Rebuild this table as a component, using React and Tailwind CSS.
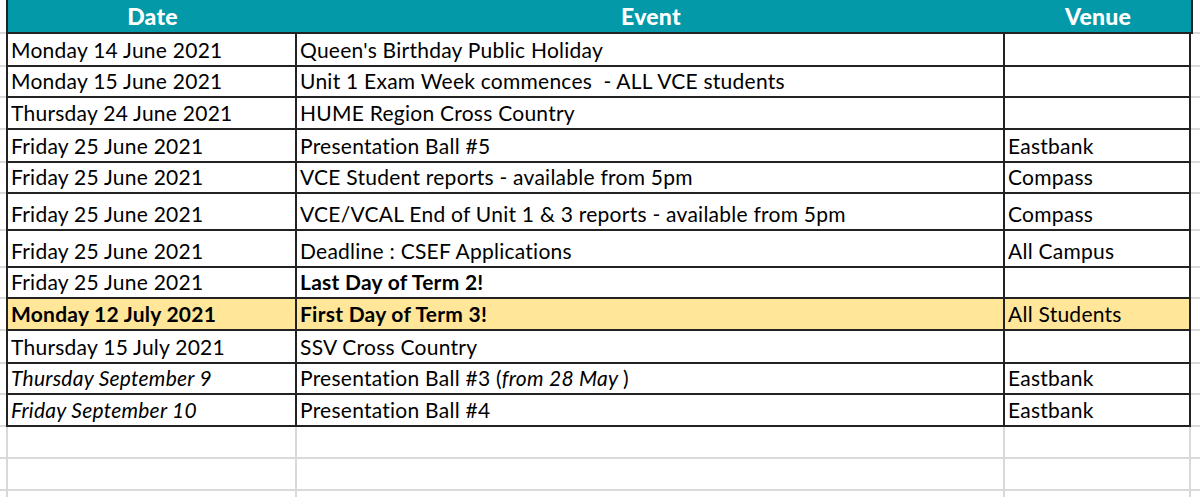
import React from 'react'

const rows = [
  { date: 'Monday 14 June 2021', event: "Queen's Birthday Public Holiday", venue: '', h: 'h-[33px]' },
  { date: 'Monday 15 June 2021', event: 'Unit 1 Exam Week commences  - ALL VCE students', venue: '', h: 'h-[31px]' },
  { date: 'Thursday 24 June 2021', event: 'HUME Region Cross Country', venue: '', h: 'h-[32px]' },
  { date: 'Friday 25 June 2021', event: 'Presentation Ball #5', venue: 'Eastbank', h: 'h-[33px]' },
  { date: 'Friday 25 June 2021', event: 'VCE Student reports - available from 5pm', venue: 'Compass', h: 'h-[31px]' },
  { date: 'Friday 25 June 2021', event: 'VCE/VCAL End of Unit 1 & 3 reports - available from 5pm', venue: 'Compass', h: 'h-[37px]' },
  { date: 'Friday 25 June 2021', event: 'Deadline : CSEF Applications', venue: 'All Campus', h: 'h-[37px]' },
  { date: 'Friday 25 June 2021', event: 'Last Day of Term 2!', venue: '', h: 'h-[31px]', boldEvent: true },
  { date: 'Monday 12 July 2021', event: 'First Day of Term 3!', venue: 'All Students', h: 'h-[32px]', highlight: true },
  { date: 'Thursday 15 July 2021', event: 'SSV Cross Country', venue: '', h: 'h-[33px]' },
  {
    date: 'Thursday September 9',
    event: (
      <>
        Presentation Ball #3 (<i>from 28 May </i>)
      </>
    ),
    venue: 'Eastbank',
    h: 'h-[31px]',
    italicDate: true
  },
  { date: 'Friday September 10', event: 'Presentation Ball #4', venue: 'Eastbank', h: 'h-[32px]', italicDate: true }
]

const cell = 'flex items-end pl-[3px] pb-[3px] leading-[24px] whitespace-pre border-b-2 border-r-2 border-[#222]'

const App = () => {
  return (
    <div className="w-[1200px] h-[497px] overflow-hidden bg-white text-black text-[21px] tracking-[0.25px] font-['Lato','Open_Sans',sans-serif]">
      {/* header */}
      <div className="flex h-[34px]">
        <div className="w-[6px] border-b-2 border-[#d9d9d9]"></div>
        <div className="flex w-[1187px] bg-[#0399a8] border-l-2 border-r-2 border-b-2 border-[#222] text-white text-[23px] font-black leading-[24px]">
          <div className="w-[289px] flex items-end justify-center pb-[4px]">Date</div>
          <div className="w-[708px] flex items-end justify-center pb-[4px]">Event</div>
          <div className="flex-1 flex items-end justify-center pb-[4px]">Venue</div>
        </div>
        <div className="flex-1 border-b-2 border-[#d9d9d9]"></div>
      </div>

      {/* rows */}
      {rows.map((r, i) => (
        <div key={i} className={`flex ${r.h}`}>
          <div className="w-[6px] border-b-2 border-[#d9d9d9]"></div>
          <div
            className={`${cell} w-[291px] border-l-2 ${r.highlight ? 'bg-[#ffe699] font-bold' : ''} ${r.italicDate ? 'italic' : ''}`}
          >
            {r.date}
          </div>
          <div className={`${cell} w-[708px] ${r.highlight ? 'bg-[#ffe699] font-bold' : ''} ${r.boldEvent ? 'font-bold' : ''}`}>
            {r.event}
          </div>
          <div className={`${cell} w-[186px] ${r.highlight ? 'bg-[#ffe699]' : ''}`}>{r.venue}</div>
          <div className="flex-1 border-b-2 border-[#d9d9d9]"></div>
        </div>
      ))}

      {/* empty sheet rows */}
      {[0, 1, 2].map((i) => (
        <div key={i} className="flex h-[32px]">
          <div className="w-[6px] border-b-2 border-[#d9d9d9]"></div>
          <div className="w-[291px] border-l-2 border-r-2 border-b-2 border-[#d9d9d9]"></div>
          <div className="w-[708px] border-r-2 border-b-2 border-[#d9d9d9]"></div>
          <div className="w-[186px] border-r-2 border-b-2 border-[#d9d9d9]"></div>
          <div className="flex-1 border-b-2 border-[#d9d9d9]"></div>
        </div>
      ))}
    </div>
  )
}

export default App
